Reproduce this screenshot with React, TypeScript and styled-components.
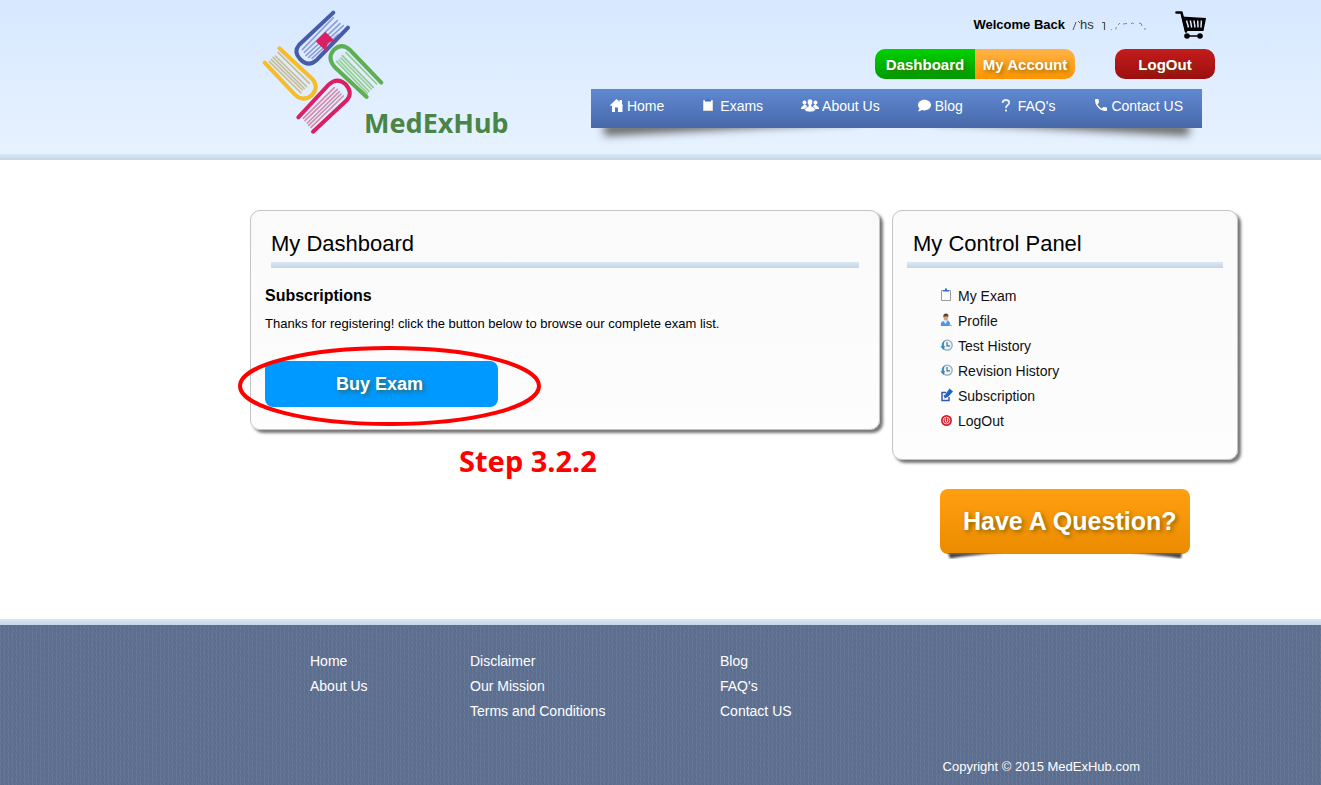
import React from "react";
import styled, { createGlobalStyle, css } from "styled-components";
import { FaComment } from "react-icons/fa";
import { MdPhone } from "react-icons/md";

const sans = `"Liberation Sans", Arial, sans-serif`;
const display = `"Noto Sans", Tahoma, sans-serif`;
const ruleGradient = "linear-gradient(#dae7f6, #c5d6e7)";

const GlobalStyle = createGlobalStyle`
  * { box-sizing: border-box; }
  html, body, #root { height: 100%; }
  body { margin: 0; background: #fff; color: #000; font: 14px/25px ${sans}; }
  h1, h2, h3, p, ul { margin: 0; padding: 0; }
  ul { list-style: none; }
  a { color: inherit; text-decoration: none; }
  svg { display: block; flex: none; }
`;

const Page = styled.div`
  min-height: 100%;
  display: flex;
  flex-direction: column;
`;

const Rule = styled.div`
  height: 6px;
  background: ${ruleGradient};
`;

/* ---------- header ---------- */

const Header = styled.header`
  position: relative;
  z-index: 0;
  display: flex;
  justify-content: space-between;
  height: 154px;
  padding: 0 106px 0 260px;
  background: linear-gradient(#d7e8ff, #e7f2ff);
`;

const Brand = styled.a`
  display: flex;
  align-items: flex-start;
  padding-top: 8px;
`;

const BrandName = styled.span`
  margin: 98px 0 0 -24px;
  font: bold 27px/34px ${display};
  color: #498547;
`;

const HeaderSide = styled.div`
  display: flex;
  flex-direction: column;
  align-items: flex-end;
`;

const Greeting = styled.div`
  display: flex;
  align-items: center;
  height: 49px;
  padding-right: 8px;
  font-size: 13px;
`;

const UserName = styled.span`
  display: flex;
  align-items: center;
  width: 74px;
  margin: 0 29px 0 7px;
  color: #333;
`;

const Actions = styled.div`
  display: flex;
  margin-bottom: 10px;
`;

const tones = {
  green: "linear-gradient(#00d200, #009b00)",
  orange: "linear-gradient(#ffb347, #ff9500)",
  red: "linear-gradient(#c41c1c, #9c0f0f)",
};

const ActionLink = styled.a<{ $tone: keyof typeof tones; $side?: "left" | "right" }>`
  display: flex;
  align-items: center;
  justify-content: center;
  width: 100px;
  height: 30px;
  background: ${(p) => tones[p.$tone]};
  border-radius: ${(p) =>
    p.$side === "left" ? "10px 0 0 10px" : p.$side === "right" ? "0 10px 10px 0" : "10px"};
  color: #fff;
  font-size: 15px;
  font-weight: bold;
  white-space: nowrap;
  text-shadow: 2px 2px 4px rgba(85, 85, 0, 0.65);
`;

const LogOutButton = styled(ActionLink).attrs({ as: "button" })`
  margin-left: 40px;
  padding: 0;
  border: 0;
  font-family: inherit;
`;

const Nav = styled.nav`
  position: relative;
  display: flex;
  height: 39px;
  margin-right: 13px;
  background: linear-gradient(#6089d2, #4768a9);
  color: #fff;

  &::before,
  &::after {
    content: "";
    position: absolute;
    z-index: -1;
    bottom: 13px;
    width: 42%;
    height: 12px;
    box-shadow: 0 14px 8px #666;
  }
  &::before { left: 12px; transform: rotate(-3deg); }
  &::after { right: 12px; transform: rotate(3deg); }
`;

const NavLink = styled.a<{ $icon: number }>`
  display: grid;
  grid-template-columns: ${(p) => p.$icon}px auto;
  align-items: center;
  padding: 0 19px 5px;
  white-space: nowrap;

  svg { margin-bottom: 2px; }
`;

/* ---------- main ---------- */

const Main = styled.main`
  flex: 1 0 auto;
  display: flex;
  align-items: flex-start;
  gap: 12px;
  padding: 50px 83px 60px 250px;
`;

const Content = styled.div`
  flex: 1;
  min-width: 0;
`;

const Sidebar = styled.aside`
  flex: none;
  width: 346px;
`;

const Panel = styled.section<{ $bottom: number }>`
  padding: 20px 14px ${(p) => p.$bottom}px;
  border: 1px solid #c4c4c4;
  border-radius: 10px;
  background: linear-gradient(#fafafa, #fdfdfd);
  box-shadow: 3px 3px 3px #777;
`;

const PanelTitle = styled.h1`
  padding: 0 0 5px 6px;
  font-size: 22px;
  font-weight: normal;
  line-height: 26px;
`;

const InsetRule = styled(Rule)`
  margin: 0 6px;
`;

const SubTitle = styled.h2`
  padding-top: 16px;
  font-size: 16px;
  line-height: 24px;
`;

const Copy = styled.p`
  padding-top: 3px;
  font-size: 13px;
  line-height: 26px;
`;

const Callout = styled.div`
  position: relative;
  width: 233px;
  margin-top: 24px;
`;

const BuyButton = styled.button`
  display: block;
  width: 100%;
  height: 46px;
  padding: 0 4px 0 0;
  border: 0;
  border-radius: 8px;
  background: #0099ff;
  color: #fff;
  font: bold 18px/24px ${sans};
  text-shadow: 2px 2px 4px rgba(70, 80, 30, 0.75);
`;

const Ring = styled.svg`
  position: absolute;
  left: -28px;
  top: -16px;
  pointer-events: none;
`;

const StepNote = styled.p`
  padding: 14px 0 0 209px;
  font: bold 29px/34px ${display};
  color: #f00;
`;

const SideList = styled.ul`
  padding: 16px 0 0 33px;
`;

const SideLink = styled.a`
  display: flex;
  align-items: center;
  gap: 5px;
  color: #111;

  svg { margin-bottom: 3px; }
`;

const QuestionLink = styled.a`
  display: block;
  width: 250px;
  margin: 29px 0 0 48px;
  padding: 17px 0 18px 23px;
  border-radius: 8px;
  background: linear-gradient(#ff9f10, #eb8c00);
  color: #fff;
  font: bold 25px/30px ${sans};
  white-space: nowrap;
  text-shadow: 2px 2px 4px rgba(85, 75, 0, 0.65);
`;

const QuestionShadow = styled.svg`
  margin: -1px 0 0 48px;
`;

/* ---------- footer ---------- */

const weave = css`
  background-color: #5f7192;
  background-image:
    repeating-linear-gradient(90deg, rgba(255, 255, 255, 0.05) 0 1px, transparent 1px 4px),
    repeating-linear-gradient(60deg, rgba(20, 40, 90, 0.08) 0 1px, transparent 1px 3px);
`;

const Footer = styled.footer`
  flex: none;
  min-height: 160px;
  padding: 24px 181px 6px 310px;
  color: #fff;
  ${weave}
`;

const FooterColumns = styled.div`
  display: grid;
  grid-template-columns: 160px 250px 1fr;
`;

const Copyright = styled.p`
  padding-top: 30px;
  text-align: right;
  font-size: 13px;
`;

/* ---------- drawings ---------- */

const Books = () => (
  <svg width="128" height="129" viewBox="30 24 384 387" fill="none" strokeLinecap="round" aria-hidden>
    <g stroke="#8f9fd6" strokeWidth="5">
      <path d="M250 53L157 149M262 62L163 157M270 71L168 167M280 77L176 172M265 103L186 175" />
    </g>
    <path stroke="#465bab" strokeWidth="12" d="M250 38L147 135Q130 155 150 177Q175 203 200 180L294 83" />
    <path fill="#dc1f62" d="M226 95L260 128Q242 120 234 130Q228 138 230 156L197 124Z" />
    <g stroke="#cbbd8e" strokeWidth="5">
      <path d="M84 157L178 250M76 168L170 260M69 172L163 266M64 179L157 270M58 185L152 278" />
    </g>
    <path stroke="#f6bd27" strokeWidth="12" d="M88 145L186 236Q208 260 187 284Q160 308 134 283L44 188" />
    <g stroke="#95cd8d" strokeWidth="5">
      <path d="M288 158L380 252M277 167L370 262M273 174L364 267M267 180L357 274M260 184L352 280" />
    </g>
    <path stroke="#5eae53" strokeWidth="12" d="M394 248L300 150Q276 127 252 149Q230 174 254 201L350 291" />
    <g stroke="#d48cab" strokeWidth="5">
      <path d="M160 355L253 263M165 362L262 268M172 369L268 275M176 376L273 282M183 382L280 288" />
    </g>
    <path stroke="#dc1f62" strokeWidth="12" d="M145 352L236 254Q262 230 287 253Q310 278 290 301L189 395" />
  </svg>
);

const Cart = () => (
  <svg width="32" height="30" viewBox="0 0 32 30" aria-hidden>
    <path d="M1.5 2.5H6.5L11 21.5" fill="none" stroke="#000" strokeWidth="2.6" strokeLinecap="round" strokeLinejoin="round" />
    <path d="M6.5 6.5L31 8L28.5 21H10Z" />
    <path d="M11.5 10.500L13.500 17.500M15.300 10.500L16.700 17.500M19 10.500L20 17.500M22.700 10.500L23 17.500M26.400 10.500L26 17.500" stroke="#dbeaff" strokeWidth="1.5" />
    <path d="M12 26H25" stroke="#000" strokeWidth="1.5" />
    <circle cx="12" cy="26" r="2.8" />
    <circle cx="25" cy="26" r="2.8" />
  </svg>
);

const NameTrace = () => (
  <svg width="54" height="12" viewBox="0 0 54 12" fill="none" stroke="#555" aria-hidden>
    <path d="M8 3.5H10.500V11" strokeWidth="1.2" />
    <path d="M17 10.500L18 11M22 8V10.500M24 6L26 4M29 5L33 4.500M37 4.500Q39 3.500 40 5M45 4Q48 4 48 7M51 9V11" opacity=".65" />
  </svg>
);

const HomeIcon = () => (
  <svg width="13" height="13" viewBox="0 0 13 13" fill="#fff" aria-hidden>
    <path d="M6.500 0L0 6.300L1 7.200L2 6.400V13H5V8.500H8V13H12.500V7L13 6.500L12 5V1H9.500V2.700Z" />
  </svg>
);

const ClipIcon = ({ light }: { light?: boolean }) => (
  <svg width="13" height="14" viewBox="0 0 13 14" aria-hidden>
    <path d="M1.500 2.500H10.500V12.500H1.500Z" fill={light ? "#fff" : "#fdfdfd"} stroke={light ? "#e0dcd4" : "#9a9a9a"} />
    <path d="M3 3.500V2H5V.5H7V2H9V3.500Z" fill="#2f73c8" />
  </svg>
);

const PeopleIcon = () => (
  <svg width="18" height="13" viewBox="0 0 18 13" fill="#fff" aria-hidden>
    <circle cx="3.500" cy="3.500" r="2" />
    <circle cx="14.500" cy="3.500" r="2" />
    <path d="M0 9.500Q0 7.500 2.500 6.500L3.500 5L6 7L5 10H0ZM18 9.500Q18 7.500 15.500 6.500L14.500 5L12 7L13 10H18Z" />
    <path d="M9 0Q11.800 0 11.600 3Q11.500 5 10.500 6V7.200Q14.500 8.500 14.500 11Q13 13 9 13Q5 13 3.500 11Q3.500 8.500 7.500 7.200V6Q6.500 5 6.400 3Q6.200 0 9 0Z" stroke="#587fc6" strokeWidth=".6" />
  </svg>
);

const QuestionIcon = () => (
  <svg width="11" height="13" viewBox="0 0 11 13" fill="none" aria-hidden>
    <path d="M1.500 3.800Q1.800 1 5 1Q8.200 1 8.200 3.600Q8.200 5 6.500 6.200Q5 7.300 5 9" stroke="#e6ecf8" strokeWidth="1.800" />
    <path d="M4 10.500H6V12.500H4Z" fill="#e6ecf8" />
  </svg>
);

const PersonIcon = () => (
  <svg width="13" height="14" viewBox="0 0 13 14" aria-hidden>
    <path d="M1 13Q0 8.500 4 8L8 7.500Q10.500 8.500 10 13Z" fill="#4b97e6" />
    <path d="M3.500 8L5.500 11L7.500 8Z" fill="#dcecff" />
    <ellipse cx="5.800" cy="4.500" rx="2.300" ry="3" fill="#d9a67c" />
    <path d="M3.300 4Q3 .5 6 .5Q9 .5 8.300 4Q7 2.500 3.300 4Z" fill="#5b4636" />
    <path d="M9 11.500L12 13" stroke="#8ab6e0" />
  </svg>
);

const HistoryIcon = () => (
  <svg width="13" height="13" viewBox="0 0 13 13" fill="none" aria-hidden>
    <circle cx="7.200" cy="6.200" r="5" fill="#edf4f8" stroke="#8eabbc" strokeWidth="1.300" />
    <path d="M5 1.500Q1.500 3.500 2 7L.5 7.500L3.500 11L5 7L3.800 7Q3.500 4 5 1.500Z" fill="#2f8dbb" />
    <path d="M7 3V6.800H10" stroke="#4f7186" strokeWidth="1.200" />
  </svg>
);

const SubscribeIcon = () => (
  <svg width="13" height="14" viewBox="0 0 13 14" fill="none" aria-hidden>
    <path d="M6 4.500H2V12.500H9V9" stroke="#3455b8" strokeWidth="1.500" />
    <path d="M4 7L5.500 10" stroke="#3455b8" strokeWidth="1.300" />
    <path d="M4.500 10.500L5.500 6L9.500 .5L13 3.500L8.500 8.500Z" fill="#1766c4" />
  </svg>
);

const PowerIcon = () => (
  <svg width="13" height="13" viewBox="0 0 13 13" fill="none" aria-hidden>
    <circle cx="6.500" cy="6.500" r="5.500" fill="#d91f2b" />
    <circle cx="6.500" cy="6.500" r="3.400" stroke="#f6c4c7" />
    <path d="M5.300 4.500V7Q5.300 8.200 6.500 8.200Q7.700 8.200 7.700 7V4.500" stroke="#fff" />
  </svg>
);

const navItems = [
  { label: "Home", width: 17, icon: <HomeIcon /> },
  { label: "Exams", width: 18, icon: <ClipIcon light /> },
  { label: "About Us", width: 21, icon: <PeopleIcon /> },
  { label: "Blog", width: 17, icon: <FaComment size={13} /> },
  { label: "FAQ's", width: 17, icon: <QuestionIcon /> },
  { label: "Contact US", width: 18, icon: <MdPhone size={16} /> },
];

const sideItems = [
  { label: "My Exam", icon: <ClipIcon /> },
  { label: "Profile", icon: <PersonIcon /> },
  { label: "Test History", icon: <HistoryIcon /> },
  { label: "Revision History", icon: <HistoryIcon /> },
  { label: "Subscription", icon: <SubscribeIcon /> },
  { label: "LogOut", icon: <PowerIcon /> },
];

const footerColumns = [
  ["Home", "About Us"],
  ["Disclaimer", "Our Mission", "Terms and Conditions"],
  ["Blog", "FAQ's", "Contact US"],
];

export default function App() {
  return (
    <Page>
      <GlobalStyle />
      <Header>
        <Brand href="#">
          <Books />
          <BrandName>MedExHub</BrandName>
        </Brand>
        <HeaderSide>
          <Greeting>
            <b>Welcome Back</b>
            <UserName>
              <svg width="8" height="12" viewBox="0 0 8 12" fill="none" stroke="#555" aria-hidden>
                <path d="M1 11L4 3M6 2L8 4" />
              </svg>
              hs
              <NameTrace />
            </UserName>
            <a href="#" aria-label="Cart"><Cart /></a>
          </Greeting>
          <Actions>
            <ActionLink href="#" $tone="green" $side="left">Dashboard</ActionLink>
            <ActionLink href="#" $tone="orange" $side="right">My Account</ActionLink>
            <LogOutButton $tone="red">LogOut</LogOutButton>
          </Actions>
          <Nav>
            {navItems.map((item) => (
              <NavLink href="#" key={item.label} $icon={item.width}>
                {item.icon}
                <span>{item.label}</span>
              </NavLink>
            ))}
          </Nav>
        </HeaderSide>
      </Header>
      <Rule />

      <Main>
        <Content>
          <Panel $bottom={22}>
            <PanelTitle>My Dashboard</PanelTitle>
            <InsetRule />
            <SubTitle>Subscriptions</SubTitle>
            <Copy>Thanks for registering! click the button below to browse our complete exam list.</Copy>
            <Callout>
              <BuyButton>Buy Exam</BuyButton>
              <Ring width="305" height="82" viewBox="0 0 305 82" fill="none" aria-hidden>
                <ellipse cx="152.500" cy="41" rx="149.500" ry="38" stroke="#f00" strokeWidth="4" />
              </Ring>
            </Callout>
          </Panel>
          <StepNote>Step 3.2.2</StepNote>
        </Content>

        <Sidebar>
          <Panel $bottom={25}>
            <PanelTitle>My Control Panel</PanelTitle>
            <Rule />
            <SideList>
              {sideItems.map((item) => (
                <li key={item.label}>
                  <SideLink href="#">
                    {item.icon}
                    {item.label}
                  </SideLink>
                </li>
              ))}
            </SideList>
          </Panel>
          <QuestionLink href="#">Have A Question?</QuestionLink>
          <QuestionShadow width="250" height="6" viewBox="0 0 250 6" aria-hidden>
            <defs>
              <filter id="soft" x="-10%" y="-50%" width="120%" height="200%">
                <feGaussianBlur stdDeviation="0.8" />
              </filter>
            </defs>
            <path d="M8 0H62Q30 2 10 5.500ZM242 0H190Q220 2 241 5.500Z" fill="#444" filter="url(#soft)" />
          </QuestionShadow>
        </Sidebar>
      </Main>

      <Rule />
      <Footer>
        <FooterColumns>
          {footerColumns.map((links) => (
            <ul key={links[0]}>
              {links.map((label) => (
                <li key={label}><a href="#">{label}</a></li>
              ))}
            </ul>
          ))}
        </FooterColumns>
        <Copyright>Copyright © 2015 MedExHub.com</Copyright>
      </Footer>
    </Page>
  );
}
